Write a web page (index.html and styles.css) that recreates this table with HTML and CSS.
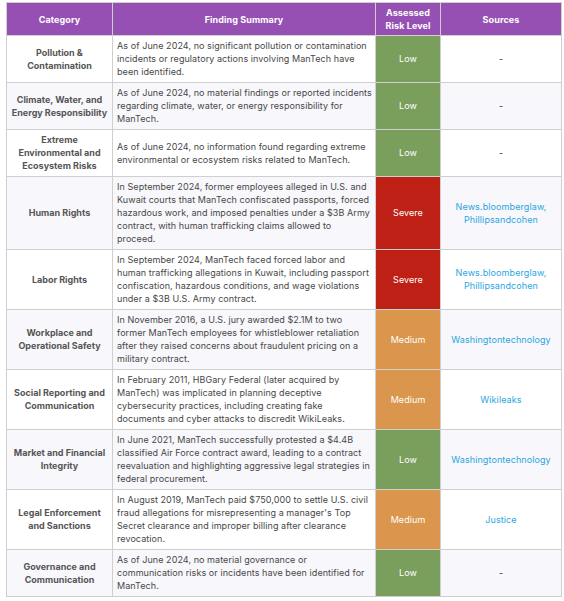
FILE: index.html
```html
<!DOCTYPE html>
<html>
<head>
<meta charset="utf-8">
<link rel="stylesheet" href="styles.css">
</head>
<body>
<table class="risk-table">
  <colgroup>
    <col class="c-cat"><col class="c-sum"><col class="c-risk"><col class="c-src">
  </colgroup>
  <thead>
    <tr><th>Category</th><th>Finding Summary</th><th>Assessed Risk Level</th><th>Sources</th></tr>
  </thead>
  <tbody>
    <tr>
      <td class="cat">Pollution &amp; Contamination</td>
      <td class="sum">As of June 2024, no significant pollution or contamination incidents or regulatory actions involving ManTech have been identified.</td>
      <td class="risk low">Low</td>
      <td class="src">-</td>
    </tr>
    <tr>
      <td class="cat">Climate, Water, and Energy Responsibility</td>
      <td class="sum">As of June 2024, no material findings or reported incidents regarding climate, water, or energy responsibility for ManTech.</td>
      <td class="risk low">Low</td>
      <td class="src">-</td>
    </tr>
    <tr>
      <td class="cat">Extreme Environmental and Ecosystem Risks</td>
      <td class="sum">As of June 2024, no information found regarding extreme environmental or ecosystem risks related to ManTech.</td>
      <td class="risk low">Low</td>
      <td class="src">-</td>
    </tr>
    <tr>
      <td class="cat">Human Rights</td>
      <td class="sum">In September 2024, former employees alleged in U.S. and Kuwait courts that ManTech confiscated passports, forced hazardous work, and imposed penalties under a $3B Army contract, with human trafficking claims allowed to proceed.</td>
      <td class="risk severe">Severe</td>
      <td class="src"><a href="#">News.bloomberglaw,<br>Phillipsandcohen</a></td>
    </tr>
    <tr>
      <td class="cat">Labor Rights</td>
      <td class="sum">In September 2024, ManTech faced forced labor and human trafficking allegations in Kuwait, including passport confiscation, hazardous conditions, and wage violations under a $3B U.S. Army contract.</td>
      <td class="risk severe">Severe</td>
      <td class="src"><a href="#">News.bloomberglaw,<br>Phillipsandcohen</a></td>
    </tr>
    <tr>
      <td class="cat">Workplace and Operational Safety</td>
      <td class="sum">In November 2016, a U.S. jury awarded $2.1M to two former ManTech employees for whistleblower retaliation after they raised concerns about fraudulent pricing on a military contract.</td>
      <td class="risk medium">Medium</td>
      <td class="src"><a href="#">Washingtontechnology</a></td>
    </tr>
    <tr>
      <td class="cat">Social Reporting and Communication</td>
      <td class="sum">In February 2011, HBGary Federal (later acquired by ManTech) was implicated in planning deceptive cybersecurity practices, including creating fake documents and cyber attacks to discredit WikiLeaks.</td>
      <td class="risk medium">Medium</td>
      <td class="src"><a href="#">Wikileaks</a></td>
    </tr>
    <tr>
      <td class="cat">Market and Financial Integrity</td>
      <td class="sum">In June 2021, ManTech successfully protested a $4.4B classified Air Force contract award, leading to a contract reevaluation and highlighting aggressive legal strategies in federal procurement.</td>
      <td class="risk low">Low</td>
      <td class="src"><a href="#">Washingtontechnology</a></td>
    </tr>
    <tr>
      <td class="cat">Legal Enforcement and Sanctions</td>
      <td class="sum">In August 2019, ManTech paid $750,000 to settle U.S. civil fraud allegations for misrepresenting a manager's Top Secret clearance and improper billing after clearance revocation.</td>
      <td class="risk medium">Medium</td>
      <td class="src"><a href="#">Justice</a></td>
    </tr>
    <tr>
      <td class="cat">Governance and Communication</td>
      <td class="sum">As of June 2024, no material governance or communication risks or incidents have been identified for ManTech.</td>
      <td class="risk low">Low</td>
      <td class="src">-</td>
    </tr>
  </tbody>
</table>
</body>
</html>
```
FILE: styles.css
```css
html, body { background: #ffffff; }
body {
  margin: 2px 0 0 6px;
  font-family: Inter, "Open Sans", sans-serif;
  font-size: 9px;
  letter-spacing: 0.07px;
  line-height: 13px;
  color: #474747;
}
.risk-table {
  border-collapse: collapse;
  table-layout: fixed;
  width: 555px;
}
.c-cat { width: 106px; }
.c-sum { width: 263px; }
.c-risk { width: 65px; }
.c-src { width: 121px; }
.risk-table th, .risk-table td {
  border: 1px solid #cfcfcf;
  vertical-align: middle;
}
.risk-table th {
  background: #9650b4;
  color: #ffffff;
  font-weight: 700;
  text-align: center;
  height: 32px;
  padding: 0 4px;
  line-height: 13px;
  letter-spacing: 0.1px;
}
.risk-table td { padding: 3px 3px 4px; }
.risk-table tbody tr:nth-child(even) td { background: #f8f7fb; }
.risk-table td.cat {
  text-align: center;
  font-weight: 700;
  color: #555555;
  padding-left: 2px;
  padding-right: 2px;
  letter-spacing: 0;
}
.risk-table td.sum { padding-left: 4px; padding-right: 3px; }
.risk-table td.risk { text-align: center; color: #ffffff; }
.risk-table tbody tr td.low { background: #7a9e5c; }
.risk-table tbody tr td.severe { background: #be2015; }
.risk-table tbody tr td.medium { background: #da964c; }
.risk-table td.src { text-align: center; color: #333333; letter-spacing: 0.1px; }
.src a { color: #2aa6df; text-decoration: none; }
```
